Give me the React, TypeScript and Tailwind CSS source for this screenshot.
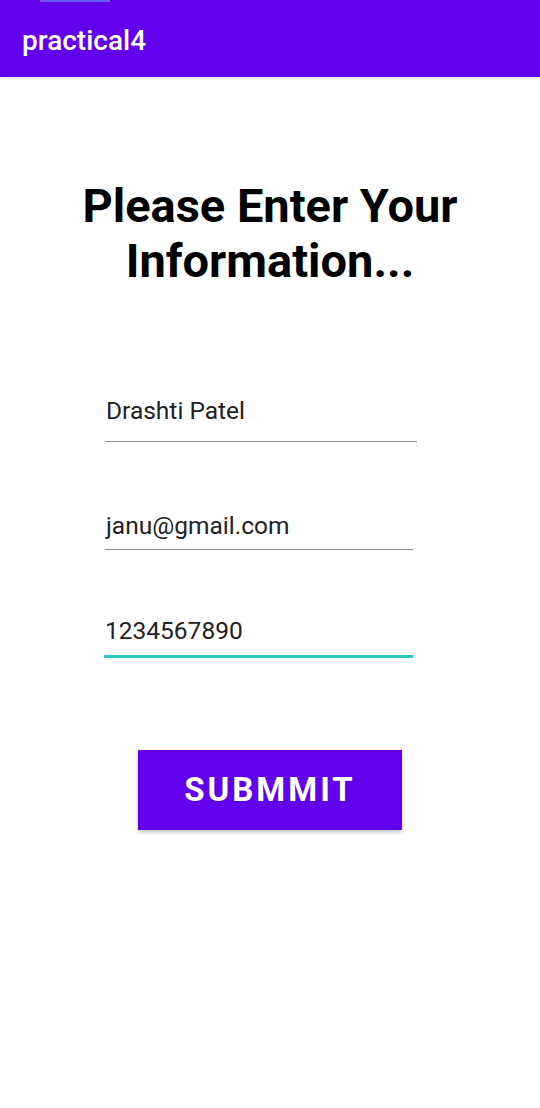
export default function App() {
  return (
    <div className="w-[540px] h-[1108px] bg-white font-['Roboto',sans-serif] overflow-hidden">
      {/* App bar */}
      <div className="relative h-[77px] bg-[#6200ee] flex items-center px-[22px] shadow-sm">
        <div className="absolute top-0 left-[40px] w-[70px] h-[2px] bg-[#6a5cf5]" />
        <span className="text-white text-[28px] font-medium leading-none pt-[5px]">practical4</span>
      </div>

      {/* Heading */}
      <h1 className="mt-[101px] text-center text-black text-[47px] font-bold leading-[55px] px-6">
        Please Enter Your
        <br />
        Information...
      </h1>

      {/* Fields */}
      <div className="mt-[109px] flex flex-col">
        <div className="ml-[105px] w-[312px] border-b-[1.5px] border-[#8a8a8a] pb-[16px] pl-[1px] text-[24.5px] leading-[28px] text-[#222]">
          Drashti Patel
        </div>
        <div className="mt-[70px] ml-[105px] w-[308px] border-b-[1.5px] border-[#8a8a8a] pb-[9px] pl-[1px] text-[24.5px] leading-[28px] text-[#222]">
          janu@gmail.com
        </div>
        <div className="mt-[67px] ml-[104px] w-[309px] border-b-[3px] border-[#2ec9c0] pb-[10px] pl-[1px] text-[24.5px] leading-[28px] text-[#222]">
          1234567890
        </div>
      </div>

      {/* Button */}
      <div className="mt-[92px] flex justify-center">
        <button className="w-[264px] h-[80px] bg-[#6200ee] text-white text-[33px] font-bold tracking-[3px] shadow-[0_2px_4px_rgba(0,0,0,0.25)]">
          SUBMMIT
        </button>
      </div>
    </div>
  )
}
